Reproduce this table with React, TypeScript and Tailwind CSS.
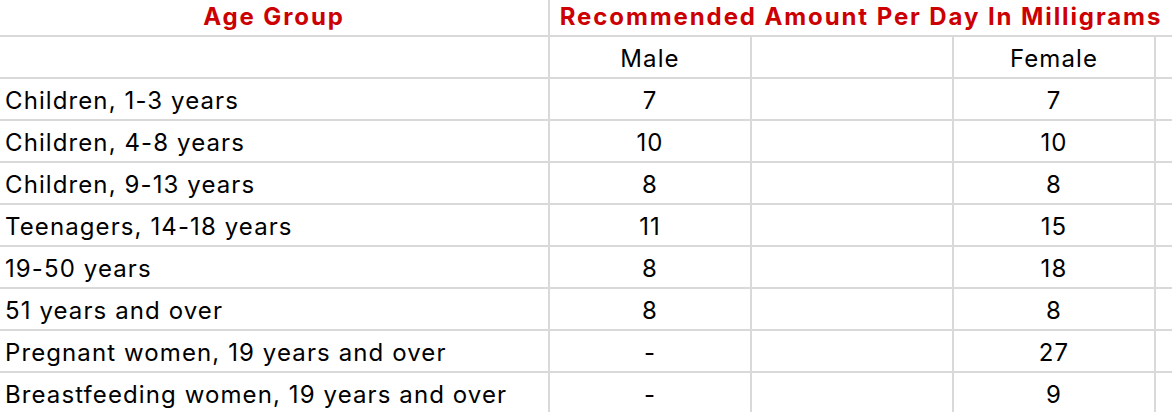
import React from "react";

const rows: [string, string, string][] = [
  ["Children, 1-3 years", "7", "7"],
  ["Children, 4-8 years", "10", "10"],
  ["Children, 9-13 years", "8", "8"],
  ["Teenagers, 14-18 years", "11", "15"],
  ["19-50 years", "8", "18"],
  ["51 years and over", "8", "8"],
  ["Pregnant women, 19 years and over", "-", "27"],
  ["Breastfeeding women, 19 years and over", "-", "9"],
];

export default function App() {
  return (
    <div
      className="w-[1172px] h-[412px] overflow-hidden bg-white text-black"
      style={{ fontFamily: "Inter, 'Noto Sans', sans-serif" }}
    >
      <div className="grid grid-cols-[548px_200px_200px_200px_1fr] auto-rows-[40px] grid-rows-[35px] gap-[2px] bg-[#d9d9d9] text-[24px] leading-none tracking-[1.1px]">
        <div className="bg-white flex items-center justify-center font-bold text-[#cc0000] tracking-[1.9px] pb-[1px]">Age Group</div>
        <div className="col-span-4 bg-white flex items-center justify-center font-bold text-[#cc0000] tracking-[1.9px] whitespace-nowrap pb-[1px]">
          Recommended Amount Per Day In Milligrams
        </div>
        <div className="bg-white" />
        <div className="bg-white flex items-center justify-center pt-[4px]">Male</div>
        <div className="bg-white" />
        <div className="bg-white flex items-center justify-center pt-[4px]">Female</div>
        <div className="bg-white" />
        {rows.map(([label, male, female]) => (
          <React.Fragment key={label}>
            <div className="bg-white flex items-center pl-[5px] pt-[4px] whitespace-nowrap">{label}</div>
            <div className="bg-white flex items-center justify-center pt-[4px]">{male}</div>
            <div className="bg-white" />
            <div className="bg-white flex items-center justify-center pt-[4px]">{female}</div>
            <div className="bg-white" />
          </React.Fragment>
        ))}
      </div>
    </div>
  );
}
